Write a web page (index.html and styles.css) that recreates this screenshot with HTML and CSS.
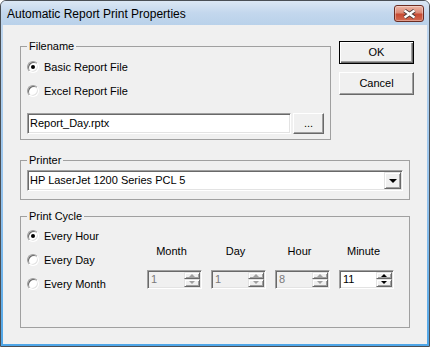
FILE: index.html
```html
<!DOCTYPE html>
<html>
<head>
<meta charset="utf-8">
<title>Automatic Report Print Properties</title>
<link rel="stylesheet" href="styles.css">
</head>
<body>
<div class="window">
	<div class="titlebar">
		<span class="title">Automatic Report Print Properties</span>
		<div class="close">
			<svg width="15" height="10" viewBox="0 0 15 10">
				<path d="M2.5 1.5 L12.5 8.5 M12.5 1.5 L2.5 8.5" stroke="#4b3a38" stroke-width="4" fill="none"/>
				<path d="M2.5 1.5 L12.5 8.5 M12.5 1.5 L2.5 8.5" stroke="#ffffff" stroke-width="2.2" fill="none"/>
			</svg>
		</div>
	</div>

	<div class="client">
		<div class="top-row">
			<fieldset class="group group-file">
				<legend>Filename</legend>
				<div class="radio-row"><span class="radio checked"></span>Basic Report File</div>
				<div class="radio-row"><span class="radio"></span>Excel Report File</div>
				<div class="file-row">
					<div class="field">Report_Day.rptx</div>
					<div class="btn btn-browse">...</div>
				</div>
			</fieldset>
			<div class="actions">
				<div class="btn btn-default">OK</div>
				<div class="btn">Cancel</div>
			</div>
		</div>

		<fieldset class="group group-printer">
			<legend>Printer</legend>
			<div class="combo">
				<span class="combo-text">HP LaserJet 1200 Series PCL 5</span>
				<span class="combo-btn"><span class="arrow-down"></span></span>
			</div>
		</fieldset>

		<fieldset class="group group-cycle">
			<legend>Print Cycle</legend>
			<div class="cycle">
				<div class="cycle-options">
					<div class="radio-row"><span class="radio checked"></span>Every Hour</div>
					<div class="radio-row"><span class="radio"></span>Every Day</div>
					<div class="radio-row"><span class="radio"></span>Every Month</div>
				</div>
				<div class="spin-grid">
					<div class="spin-label">Month</div>
					<div class="spin-label">Day</div>
					<div class="spin-label">Hour</div>
					<div class="spin-label">Minute</div>

					<div class="spin disabled">
						<span class="spin-value">1</span>
						<span class="spin-btns"><span class="spin-up"><i></i></span><span class="spin-down"><i></i></span></span>
					</div>
					<div class="spin disabled">
						<span class="spin-value">1</span>
						<span class="spin-btns"><span class="spin-up"><i></i></span><span class="spin-down"><i></i></span></span>
					</div>
					<div class="spin disabled">
						<span class="spin-value">8</span>
						<span class="spin-btns"><span class="spin-up"><i></i></span><span class="spin-down"><i></i></span></span>
					</div>
					<div class="spin">
						<span class="spin-value">11</span>
						<span class="spin-btns"><span class="spin-up"><i></i></span><span class="spin-down"><i></i></span></span>
					</div>
				</div>
			</div>
		</fieldset>
	</div>
</div>
</body>
</html>
```

FILE: styles.css
```css
body {
	margin: 0;
	font-family: 'Liberation Sans', Arial, sans-serif;
	font-size: 11px;
	color: #000;
	background: #fff;
}

.window {
	width: 430px;
	height: 347px;
	box-sizing: border-box;
	border: 1px solid #4a4f55;
	border-radius: 6px 6px 0 0;
	background: linear-gradient(#c4d8ee, #8fc0ec 60%, #4fa6e8);
	display: flex;
	flex-direction: column;
	overflow: hidden;
}

/* title bar */
.titlebar {
	height: 24px;
	flex: 0 0 auto;
	display: flex;
	align-items: center;
	padding-left: 6px;
	background: linear-gradient(#dbe7f4, #c3d7ed 50%, #b9d1ea);
}

.title {
	font-size: 12px;
	color: #000;
	margin-top: 1px;
}

.close {
	margin-left: auto;
	margin-right: 5px;
	align-self: flex-start;
	margin-top: 4px;
	width: 30px;
	height: 17px;
	box-sizing: border-box;
	border: 1px solid #6b2c22;
	border-radius: 3px;
	background: linear-gradient(#ecb5a6, #dc8b77 45%, #c74a32 55%, #d36b52);
	box-shadow: inset 0 0 0 1px rgba(255, 255, 255, 0.35);
	display: flex;
	align-items: center;
	justify-content: center;
}

/* client area */
.client {
	flex: 1 1 auto;
	margin: 0 2px 2px;
	background: #f0f0f0;
	padding: 15px 0 0 17px;
}

.top-row {
	display: flex;
	align-items: flex-start;
}

.group {
	margin: 0;
	padding: 0 6px;
	border: 1px solid #a0a0a0;
	box-sizing: border-box;
	min-width: 0;
}

.group legend {
	padding: 0 2px;
	line-height: 13px;
	height: 13px;
}

.group-file {
	width: 311px;
	height: 100px;
}

.group-printer {
	width: 390px;
	height: 46px;
	margin-top: 14px;
}

.group-cycle {
	width: 390px;
	height: 118px;
	margin-top: 10px;
}

/* radios */
.radio-row {
	display: flex;
	align-items: center;
	height: 16px;
	margin-top: 8px;
}

.group-file .radio-row:first-of-type {
	margin-top: 6px;
}

.cycle-options .radio-row:first-child {
	margin-top: 5px;
}

.radio {
	width: 12px;
	height: 12px;
	box-sizing: border-box;
	border-radius: 50%;
	border: 1px solid;
	border-color: #a0a0a0 #ffffff #ffffff #a0a0a0;
	box-shadow: inset 1px 1px 0 #696969, inset -1px -1px 0 #e3e3e3;
	background: #fff;
	margin-right: 5px;
	display: flex;
	align-items: center;
	justify-content: center;
}

.radio.checked::after {
	content: '';
	width: 4px;
	height: 4px;
	border-radius: 50%;
	background: #000;
}

/* sunken fields */
.field,
.combo,
.spin {
	box-sizing: border-box;
	border: 1px solid;
	border-color: #a0a0a0 #ffffff #ffffff #a0a0a0;
	padding: 1px;
	box-shadow: inset 1px 1px 0 #696969, inset -1px -1px 0 #e3e3e3;
	background: #fff;
}

.file-row {
	display: flex;
	margin-top: 14px;
}

.field {
	flex: 1 1 auto;
	height: 21px;
	padding-left: 2px;
	line-height: 17px;
}

/* buttons */
.btn {
	box-sizing: border-box;
	border: 1px solid;
	border-color: #ffffff #696969 #696969 #ffffff;
	box-shadow: inset -1px -1px 0 #a0a0a0;
	background: #f0f0f0;
	text-align: center;
	width: 75px;
	height: 23px;
	line-height: 20px;
}

.btn-default {
	border: 1px solid #000;
	box-shadow: inset 1px 1px 0 #ffffff, inset -1px -1px 0 #696969, inset -2px -2px 0 #a0a0a0;
}

.btn-browse {
	width: 31px;
	height: 21px;
	margin-left: 2px;
	line-height: 19px;
}

.actions {
	display: flex;
	flex-direction: column;
	gap: 8px;
	margin: 1px 0 0 8px;
}

/* combo */
.combo {
	margin-top: 3px;
	height: 21px;
	display: flex;
}

.combo-text {
	flex: 1 1 auto;
	padding-left: 1px;
	line-height: 17px;
}

.combo-btn {
	width: 17px;
	height: 17px;
	box-sizing: border-box;
	border: 1px solid;
	border-color: #e3e3e3 #696969 #696969 #e3e3e3;
	box-shadow: inset 1px 1px 0 #ffffff, inset -1px -1px 0 #a0a0a0;
	background: #f0f0f0;
	display: flex;
	align-items: center;
	justify-content: center;
}

.arrow-down {
	width: 0;
	height: 0;
	border-left: 4px solid transparent;
	border-right: 4px solid transparent;
	border-top: 4px solid #000;
	margin-top: 1px;
}

/* print cycle */
.cycle {
	display: flex;
}

.cycle-options {
	width: 120px;
	flex: 0 0 auto;
}

.spin-grid {
	display: grid;
	grid-template-columns: repeat(4, 55px);
	column-gap: 9px;
	row-gap: 8px;
	margin-top: 22px;
}

.spin-label {
	line-height: 13px;
	text-align: center;
	padding-right: 6px;
	font-size: 11px;
}

.spin {
	height: 19px;
	display: flex;
}

.spin.disabled {
	background: #f0f0f0;
	color: #7a7a7a;
}

.spin-value {
	flex: 1 1 auto;
	padding-left: 2px;
	line-height: 15px;
	font-size: 11px;
}

.spin-btns {
	width: 16px;
	display: flex;
	flex-direction: column;
}

.spin-up,
.spin-down {
	flex: 1 1 0;
	box-sizing: border-box;
	border: 1px solid;
	border-color: #e3e3e3 #696969 #696969 #e3e3e3;
	box-shadow: inset 1px 1px 0 #ffffff, inset -1px -1px 0 #a0a0a0;
	background: #f0f0f0;
	display: flex;
	align-items: center;
	justify-content: center;
}

.spin-up i,
.spin-down i {
	width: 0;
	height: 0;
	border-left: 3px solid transparent;
	border-right: 3px solid transparent;
}

.spin-up i {
	border-bottom: 3px solid #000;
}

.spin-down i {
	border-top: 3px solid #000;
}

.spin.disabled .spin-up i {
	border-bottom-color: #a0a0a0;
}

.spin.disabled .spin-down i {
	border-top-color: #a0a0a0;
}
```
